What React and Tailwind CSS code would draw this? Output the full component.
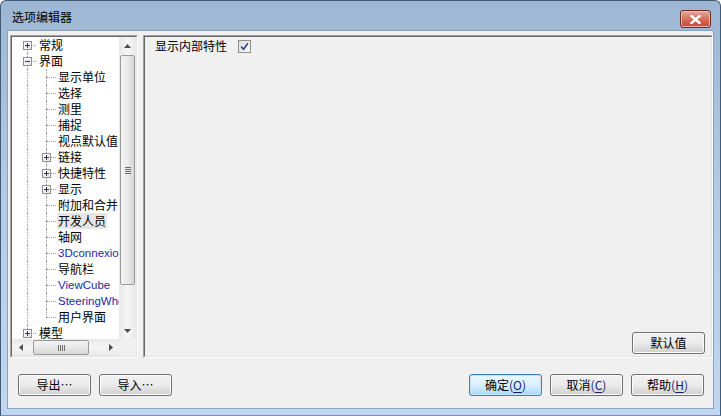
const cjk = "font-['Noto_Sans_CJK_SC','Noto_Sans',sans-serif]";

const rows = [
  { label: "常规", level: 0, exp: "+", vert: "bottom" },
  { label: "界面", level: 0, exp: "-", vert: "full" },
  { label: "显示单位", level: 1 },
  { label: "选择", level: 1 },
  { label: "测里", level: 1 },
  { label: "捕捉", level: 1 },
  { label: "视点默认值", level: 1 },
  { label: "链接", level: 1, exp: "+" },
  { label: "快捷特性", level: 1, exp: "+" },
  { label: "显示", level: 1, exp: "+" },
  { label: "附加和合并", level: 1 },
  { label: "开发人员", level: 1, hl: true },
  { label: "轴网", level: 1 },
  { label: "3Dconnexion", level: 1, latin: true },
  { label: "导航栏", level: 1 },
  { label: "ViewCube", level: 1, latin: true },
  { label: "SteeringWheels", level: 1, latin: true },
  { label: "用户界面", level: 1, last: true },
  { label: "模型", level: 0, exp: "+", vert: "top" },
];

function Expander({ sign, left }) {
  return (
    <div
      className={`absolute ${left} top-[4px] w-[9px] h-[9px] border border-[#919191] bg-gradient-to-br from-white to-[#e2e2e2] flex items-center justify-center`}
    >
      <div className="relative w-[5px] h-[5px]">
        <div className="absolute left-0 top-[2px] w-[5px] h-px bg-[#2b3a58]" />
        {sign === "+" && <div className="absolute left-[2px] top-0 w-px h-[5px] bg-[#2b3a58]" />}
      </div>
    </div>
  );
}

function VLine({ kind, left }) {
  const pos = kind === "bottom" ? "top-[8px] h-[8px]" : kind === "top" ? "top-0 h-[8px]" : "top-0 h-4";
  return <div className={`absolute ${left} ${pos} border-l border-dotted border-[#a0a0a0]`} />;
}

function TreeRow({ row }) {
  return (
    <div className="flex h-4 items-center whitespace-nowrap">
      <div className="relative w-[26px] h-4 shrink-0">
        <VLine kind={row.level === 0 ? row.vert : "full"} left="left-[15px]" />
        {row.level === 0 && (
          <>
            <div className="absolute left-[15px] top-[8px] w-[9px] border-t border-dotted border-[#a0a0a0]" />
            <Expander sign={row.exp} left="left-[11px]" />
          </>
        )}
      </div>
      {row.level === 1 && (
        <div className="relative w-[19px] h-4 shrink-0">
          <VLine kind={row.last ? "top" : "full"} left="left-[8px]" />
          <div className="absolute left-[8px] top-[8px] w-[10px] border-t border-dotted border-[#a0a0a0]" />
          {row.exp && <Expander sign={row.exp} left="left-[4px]" />}
        </div>
      )}
      <span
        className={
          row.latin
            ? "font-['Liberation_Sans',sans-serif] text-[11.5px] text-[#1c2aa8] leading-4 pl-px"
            : `${cjk} text-[12px] text-black leading-4 px-px ${row.hl ? "bg-[#e6e6e6]" : ""}`
        }
      >
        {row.label}
      </span>
    </div>
  );
}

function Arrow({ dir }) {
  const pts = {
    up: "0,4 7,4 3.5,0",
    down: "0,0 7,0 3.5,4",
    left: "4,0 4,7 0,3.5",
    right: "0,0 0,7 4,3.5",
  }[dir];
  const vertical = dir === "up" || dir === "down";
  return (
    <svg width={vertical ? 7 : 4} height={vertical ? 4 : 7} viewBox={vertical ? "0 0 7 4" : "0 0 4 7"}>
      <polygon points={pts} fill="#4d4d4d" />
    </svg>
  );
}

function Button({ children, className = "", primary }) {
  return (
    <div
      className={`w-[73px] h-[22px] rounded-[3px] border flex items-center justify-center ${cjk} text-[12px] leading-none ${
        primary
          ? "border-[#3c7fb1] bg-gradient-to-b from-[#eaf6fd] via-[#d9f0fc] to-[#a7d9f5] shadow-[inset_0_0_0_1px_#c4e5f6]"
          : "border-[#707070] bg-gradient-to-b from-[#f2f2f2] via-[#ebebeb] to-[#cfcfcf] shadow-[inset_0_0_0_1px_#fbfbfb]"
      } ${className}`}
    >
      {children}
    </div>
  );
}

function Key({ k }) {
  return (
    <span className="text-[#1d1d6e]">
      (<span className="underline underline-offset-2">{k}</span>)
    </span>
  );
}

export default function App() {
  return (
    <div className="w-[721px] h-[416px] flex flex-col rounded-t-[6px] border border-[#3f5b78] border-b-[#3fa4cf] bg-gradient-to-b from-[#9db6d3] via-[#b6cce5] to-[#c2d7ee] overflow-hidden">
      {/* title bar */}
      <div className="h-[29px] flex items-center justify-between pl-[11px] pr-[9px] shrink-0">
        <span className={`${cjk} text-[12px] text-black pt-[2px]`}>选项编辑器</span>
        <div className="w-[31px] h-[18px] mt-[7px] rounded-[3px] border border-[#6e2c22] bg-gradient-to-b from-[#e9a99b] via-[#d4705c] to-[#c4452d] flex items-center justify-center shadow-[inset_0_0_0_1px_#f0b7aa]">
          <svg width="11" height="9" viewBox="0 0 11 9">
            <path d="M1.5 1 L9.5 8 M9.5 1 L1.5 8" stroke="#ffffff" strokeWidth="2.4" strokeLinecap="square" />
          </svg>
        </div>
      </div>

      {/* client area */}
      <div className="flex-1 mx-[6px] mb-[6px] border border-[#8aa2bd] bg-[#f0f0f0] flex flex-col">
        <div className="flex pt-[4px] h-[327px]">
          {/* tree panel */}
          <div className="ml-[2px] w-[128px] h-[323px] border-t border-l border-[#a0a0a0] border-r border-b border-r-white border-b-white">
            <div className="w-full h-full border-t border-l border-[#696969] border-r border-b border-r-[#e3e3e3] border-b-[#e3e3e3] bg-white flex flex-col">
              <div className="flex flex-1 min-h-0">
                <div className="flex-1 overflow-hidden">
                  {rows.map((r) => (
                    <TreeRow key={r.label} row={r} />
                  ))}
                </div>
                {/* vertical scrollbar */}
                <div className="w-[17px] bg-gradient-to-r from-[#e8e8e8] via-[#f5f5f5] to-[#e8e8e8] flex flex-col">
                  <div className="h-[17px] flex items-center justify-center">
                    <Arrow dir="up" />
                  </div>
                  <div className="flex-1 pt-px">
                    <div className="mx-px h-[230px] rounded-[2px] border border-[#9a9a9a] bg-gradient-to-r from-[#f3f3f3] via-[#e9e9e9] to-[#d6d6d6] flex flex-col items-center justify-center gap-[1px]">
                      <div className="w-[6px] h-px bg-[#6d6d6d]" />
                      <div className="w-[6px] h-px bg-[#6d6d6d]" />
                      <div className="w-[6px] h-px bg-[#6d6d6d]" />
                      <div className="w-[6px] h-px bg-[#6d6d6d]" />
                    </div>
                  </div>
                  <div className="h-[17px] flex items-center justify-center">
                    <Arrow dir="down" />
                  </div>
                </div>
              </div>
              {/* horizontal scrollbar */}
              <div className="h-[17px] flex shrink-0">
                <div className="flex-1 flex bg-gradient-to-b from-[#e8e8e8] via-[#f5f5f5] to-[#e8e8e8]">
                  <div className="w-[17px] flex items-center justify-center">
                    <Arrow dir="left" />
                  </div>
                  <div className="flex-1 pl-[4px] py-px">
                    <div className="w-[56px] h-full rounded-[2px] border border-[#9a9a9a] bg-gradient-to-b from-[#f3f3f3] via-[#e9e9e9] to-[#d6d6d6] flex items-center justify-center gap-[1px]">
                      <div className="w-px h-[6px] bg-[#6d6d6d]" />
                      <div className="w-px h-[6px] bg-[#6d6d6d]" />
                      <div className="w-px h-[6px] bg-[#6d6d6d]" />
                      <div className="w-px h-[6px] bg-[#6d6d6d]" />
                    </div>
                  </div>
                  <div className="w-[17px] flex items-center justify-center">
                    <Arrow dir="right" />
                  </div>
                </div>
                <div className="w-[17px] bg-[#f0f0f0]" />
              </div>
            </div>
          </div>

          {/* right panel */}
          <div className="ml-[5px] flex-1 h-[323px] border-t border-l border-[#a0a0a0] border-r border-b border-r-white border-b-white">
            <div className="w-full h-full border-t border-l border-[#696969] border-r border-b border-r-[#e3e3e3] border-b-[#e3e3e3] bg-[#f0f0f0] flex flex-col">
              <div className="flex items-center pl-[10px] pt-[1px] h-[17px]">
                <span className={`${cjk} text-[12px] text-black leading-4`}>显示内部特性</span>
                <div className="ml-[11px] w-[13px] h-[13px] border border-[#8f8f8f] bg-gradient-to-br from-[#dcdcdc] to-[#fbfbfb] p-px flex items-center justify-center">
                  <svg width="9" height="9" viewBox="0 0 9 9">
                    <path d="M1.2 4.6 L3.6 7.2 L7.8 1.3" fill="none" stroke="#2c3f96" strokeWidth="1.6" />
                  </svg>
                </div>
              </div>
              <div className="flex-1" />
              <div className="flex justify-end pr-[6px] pb-[2px]">
                <Button>默认值</Button>
              </div>
            </div>
          </div>
        </div>

        {/* bottom buttons */}
        <div className="flex items-start pt-[16px] pl-[10px] pr-[9px]">
          <Button>导出…</Button>
          <Button className="ml-[8px]">导入…</Button>
          <div className="flex-1" />
          <Button primary>
            确定<Key k="O" />
          </Button>
          <Button className="ml-[8px]">
            取消<Key k="C" />
          </Button>
          <Button className="ml-[8px]">
            帮助<Key k="H" />
          </Button>
        </div>
      </div>
    </div>
  );
}
